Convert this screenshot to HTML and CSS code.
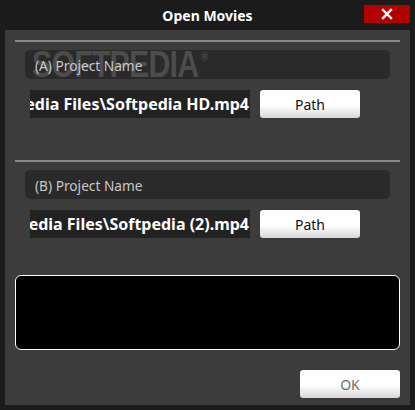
FILE: index.html
```html
<!DOCTYPE html>
<html>
<head>
<meta charset="utf-8">
<link rel="stylesheet" href="styles.css">
</head>
<body>
<div class="window">
  <div class="titlebar">
    <div class="title">Open Movies</div>
    <button class="close" aria-label="Close">
      <svg width="12" height="12" viewBox="0 0 12 12"><path d="M2 2 L10 10 M10 2 L2 10" stroke="#fff" stroke-width="2.4" stroke-linecap="square"/></svg>
    </button>
  </div>
  <div class="panel">
    <div class="sep"></div>
    <div class="section">
      <div class="name"><span>(A) Project Name</span></div>
      <div class="row">
        <div class="file"><span>C:\Softpedia Files\Softpedia HD.mp4</span></div>
        <button class="btn">Path</button>
      </div>
    </div>
    <div class="sep sep2"></div>
    <div class="section">
      <div class="name"><span>(B) Project Name</span></div>
      <div class="row">
        <div class="file"><span>C:\Softpedia Files\Softpedia (2).mp4</span></div>
        <button class="btn">Path</button>
      </div>
    </div>
    <div class="log"></div>
    <div class="footer">
      <button class="btn ok">OK</button>
    </div>
    <div class="watermark">SOFTPEDIA<span class="reg">®</span></div>
  </div>
</div>
</body>
</html>
```
FILE: styles.css
```css
* { box-sizing: border-box; }
html, body { margin: 0; padding: 0; }
body {
  background: #1b1b1b;
  font-family: "Noto Sans", "Open Sans", sans-serif;
  width: 415px;
  height: 410px;
  overflow: hidden;
}
.window {
  width: 415px;
  height: 410px;
  display: flex;
  flex-direction: column;
}
.titlebar {
  height: 30px;
  display: grid;
  grid-template-columns: 1fr auto 1fr;
  align-items: start;
}
.title {
  grid-column: 2;
  color: #fff;
  font-weight: 700;
  font-size: 14px;
  line-height: 30px;
  margin-top: 1px;
}
.close {
  grid-column: 3;
  justify-self: end;
  margin: 5px 5px 0 0;
  width: 46px;
  height: 18px;
  background: #b30000;
  border: 0;
  padding: 0;
  display: flex;
  align-items: center;
  justify-content: center;
}
.panel {
  position: relative;
  margin: 0 5px 5px 5px;
  height: 375px;
  background: #3c3c3c;
  padding: 10px 10px 0 10px;
  display: flex;
  flex-direction: column;
}
.watermark {
  position: absolute;
  z-index: 1;
  left: 27px;
  top: 15px;
  font-family: "Liberation Sans", Arial, sans-serif;
  font-weight: 700;
  font-size: 37px;
  letter-spacing: -1px;
  line-height: 40px;
  height: 40px;
  white-space: nowrap;
  color: rgba(120, 120, 120, 0.45);
  pointer-events: none;
  transform: scaleX(0.82);
  transform-origin: left top;
}
.watermark .reg {
  position: relative;
  top: -16px;
  font-size: 12px;
  line-height: 0;
  margin-left: 3px;
}
.sep {
  height: 2px;
  background: #8a8a8a;
}
.sep2 { margin-top: 42px; }
.section {
  padding: 0 10px;
  margin-top: 8px;
}
.name {
  height: 29px;
  background: #2a2a2a;
  border-radius: 5px;
  color: #c8c8c8;
  font-size: 13.7px;
  line-height: 29px;
  padding: 1px 0 0 10px;
}
.name span {
  position: relative;
  z-index: 2;
}
.row {
  display: flex;
  gap: 10px;
  margin-top: 11px;
  padding-left: 5px;
}
.file {
  width: 220px;
  height: 28px;
  background: #222;
  display: flex;
  justify-content: flex-end;
  align-items: center;
  overflow: hidden;
  padding-right: 1px;
}
.file span {
  white-space: nowrap;
  color: #fff;
  font-weight: 700;
  font-size: 16px;
  flex-shrink: 0;
}
.btn {
  width: 100px;
  height: 28px;
  border: 0;
  border-radius: 3px;
  background: linear-gradient(#fdfdfd 0%, #ffffff 55%, #d6d6d6 100%);
  font-family: "Noto Sans", "Open Sans", sans-serif;
  font-size: 14px;
  color: #111;
  padding: 0;
}
.log {
  margin-top: 37px;
  height: 75px;
  background: #000;
  border: 1px solid #fff;
  border-radius: 6px;
}
.footer {
  display: flex;
  justify-content: flex-end;
  margin-top: 20px;
}
.ok { color: #6e6e6e; font-size: 14px; }
```
